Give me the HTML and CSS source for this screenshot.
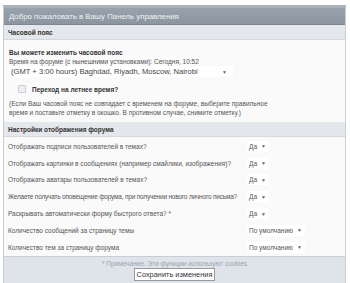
FILE: index.html
```html
<!DOCTYPE html>
<html lang="ru">
<head>
  <meta charset="UTF-8" />
  <title>Панель управления</title>
  <link rel="stylesheet" href="styles.css">
</head>
<body>
  <div class="panel">
    <div class="panel-title">Добро пожаловать в Вашу Панель управления</div>

    <div class="section-head">Часовой пояс</div>
    <div class="tz">
      <div class="tz-title">Вы можете изменить часовой пояс</div>
      <div class="tz-now">Время на форуме (с нынешними установками): Сегодня, 10:52</div>
      <div class="tz-select">
        <span>(GMT + 3:00 hours) Baghdad, Riyadh, Moscow, Nairobi</span>
        <span class="arrow">&#9660;</span>
      </div>
      <div class="dst">
        <span class="checkbox"></span>
        <span class="dst-label">Переход на летнее время?</span>
      </div>
      <p class="tz-note">(Если Ваш часовой пояс не совпадает с временем на форуме, выберите правильное<br>время и поставьте отметку в окошко. В противном случае, снимите отметку.)</p>
    </div>

    <div class="section-head">Настройки отображения форума</div>
    <div class="options">
      <div class="opt">
        <span class="opt-label">Отображать подписи пользователей в темах?</span>
        <span class="opt-value"><span class="pick">Да <span class="arrow">&#9660;</span></span></span>
      </div>
      <div class="opt">
        <span class="opt-label">Отображать картинки в сообщениях (например смайлики, изображения)?</span>
        <span class="opt-value"><span class="pick">Да <span class="arrow">&#9660;</span></span></span>
      </div>
      <div class="opt">
        <span class="opt-label">Отображать аватары пользователей в темах?</span>
        <span class="opt-value"><span class="pick">Да <span class="arrow">&#9660;</span></span></span>
      </div>
      <div class="opt">
        <span class="opt-label tight">Желаете получать оповещение форума, при получении нового личного письма?</span>
        <span class="opt-value"><span class="pick">Да <span class="arrow">&#9660;</span></span></span>
      </div>
      <div class="opt">
        <span class="opt-label">Раскрывать автоматически форму быстрого ответа? *</span>
        <span class="opt-value"><span class="pick">Да <span class="arrow">&#9660;</span></span></span>
      </div>
      <div class="opt">
        <span class="opt-label">Количество сообщений за страницу темы</span>
        <span class="opt-value"><span class="pick">По умолчанию <span class="arrow">&#9660;</span></span></span>
      </div>
      <div class="opt">
        <span class="opt-label">Количество тем за страницу форума</span>
        <span class="opt-value"><span class="pick">По умолчанию <span class="arrow">&#9660;</span></span></span>
      </div>
    </div>

    <div class="panel-foot">
      <div class="foot-note">* Примечание. Эти функции используют cookies</div>
      <button class="save-btn">Сохранить изменения</button>
    </div>
  </div>
</body>
</html>
```

FILE: styles.css
```css
:root {
  --line: #c9ced6;
  --head: #e4e7eb;
  --text: #555;
  --foot: #dfe4ea;
}

* {
  box-sizing: border-box;
  margin: 0;
  padding: 0;
}

body {
  background: #fff;
  font-family: "Liberation Sans", Arial, sans-serif;
  font-size: 6.5px;
  color: var(--text);
  padding: 5px 4px 0 3px;
}

.panel {
  border: 1px solid var(--line);
  border-top: 3px solid #a9b1ba;
  background: #fafafa;
}

.panel-title {
  background: linear-gradient(#98a2ac, #8c96a0);
  color: #eef1f4;
  font-size: 7.8px;
  height: 17px;
  line-height: 17px;
  padding-left: 5px;
  border-bottom: 1px solid #7d8791;
}

.section-head {
  background: var(--head);
  border-bottom: 1px solid #d5d9df;
  color: #333;
  font-weight: 700;
  height: 15px;
  line-height: 15px;
  padding-left: 4px;
}

.tz {
  padding: 8px 5px 5px;
  white-space: nowrap;
}

.tz-title {
  color: #333;
  font-weight: 700;
  line-height: 9px;
}

.tz-now {
  line-height: 9px;
}

.tz-select {
  display: flex;
  justify-content: space-between;
  align-items: center;
  width: 224px;
  height: 11px;
  padding: 0 6px 0 2px;
  background: #fff;
  color: #444;
  font-size: 7.6px;
}

.arrow {
  font-size: 5px;
  color: #666;
  margin-left: 4px;
}

.dst {
  display: flex;
  align-items: center;
  gap: 6px;
  margin: 8px 0 6px 9px;
}

.checkbox {
  width: 8px;
  height: 8px;
  border: 1px solid #ccd;
  background: #eceef2;
  border-radius: 1px;
}

.dst-label {
  color: #333;
  font-weight: 700;
}

.tz-note {
  line-height: 9px;
}

.options {
  padding: 1px 0 0;
}

.opt {
  display: flex;
  align-items: center;
  height: 16.8px;
  padding-left: 4px;
}

.opt-label {
  flex: 1;
  min-width: 0;
  white-space: nowrap;
}

.opt-label.tight {
  letter-spacing: -0.2px;
}

.opt-value {
  width: 98px;
  flex: none;
}

.pick {
  display: inline-flex;
  align-items: center;
  height: 11px;
  padding: 0 3px 0 2px;
  background: #fff;
}

.panel-foot {
  background: var(--foot);
  border-top: 1px solid var(--line);
  text-align: center;
  padding: 2px 0 3px;
}

.foot-note {
  color: #9aa3ad;
  line-height: 9px;
}

.save-btn {
  font-family: "Liberation Sans", Arial, sans-serif;
  font-size: 7.4px;
  color: #333;
  background: #fff;
  border: 1px solid #999;
  padding: 1px 2px;
}
```
